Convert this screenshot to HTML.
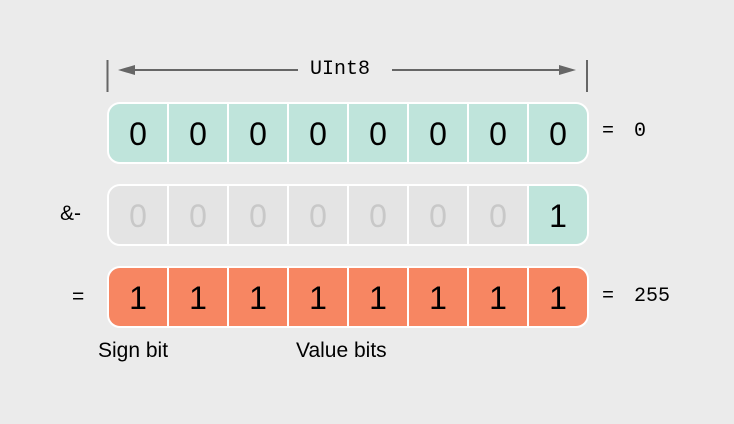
<!DOCTYPE html>
<html><head><style>
body{margin:0;width:734px;height:424px;background:#ebebeb;position:relative;overflow:hidden;font-family:"Liberation Sans",sans-serif}
.row{position:absolute;left:107px;width:478px;height:58px;border:2px solid #fff;border-radius:13px;overflow:hidden;display:flex}
.row div{flex:1;display:flex;align-items:center;justify-content:center;font-size:32px;padding-top:3px;color:#000;border-left:2px solid #fff}
.row div:first-child{border-left:none}
.t div{background:#bfe4db}
.g div{background:#e4e4e4;color:#c8c8c8}
.o div{background:#f78662}
.lab{position:absolute;font-size:21px;color:#000}
.mono{position:absolute;font-family:"Liberation Mono",monospace;font-size:20px;color:#000}
</style></head><body>
<svg width="734" height="424" style="position:absolute;left:0;top:0">
<line x1="107.5" y1="60" x2="107.5" y2="92" stroke="#666" stroke-width="2"/>
<line x1="587" y1="60" x2="587" y2="92" stroke="#666" stroke-width="2"/>
<line x1="125" y1="70" x2="298" y2="70" stroke="#666" stroke-width="2"/>
<line x1="392" y1="70" x2="565" y2="70" stroke="#666" stroke-width="2"/>
<polygon points="118,70 135,65 135,75" fill="#666"/>
<polygon points="576,70 559,65 559,75" fill="#666"/>
</svg>
<div class="mono" style="left:310px;top:58px">UInt8</div>
<div class="row t" style="top:102px"><div>0</div><div>0</div><div>0</div><div>0</div><div>0</div><div>0</div><div>0</div><div>0</div></div>
<div class="row g" style="top:184px"><div>0</div><div>0</div><div>0</div><div>0</div><div>0</div><div>0</div><div>0</div><div style="background:#bfe4db;color:#000">1</div></div>
<div class="row o" style="top:266px"><div>1</div><div>1</div><div>1</div><div>1</div><div>1</div><div>1</div><div>1</div><div>1</div></div>
<div class="mono" style="left:602px;top:120px">=</div>
<div class="mono" style="left:634px;top:120px">0</div>
<div class="lab" style="left:60px;top:202px">&amp;-</div>
<div class="lab" style="left:72px;top:285px">=</div>
<div class="mono" style="left:602px;top:285px">=</div>
<div class="mono" style="left:634px;top:285px">255</div>
<div class="lab" style="left:98px;top:339px">Sign bit</div>
<div class="lab" style="left:296px;top:339px">Value bits</div>
</body></html>
